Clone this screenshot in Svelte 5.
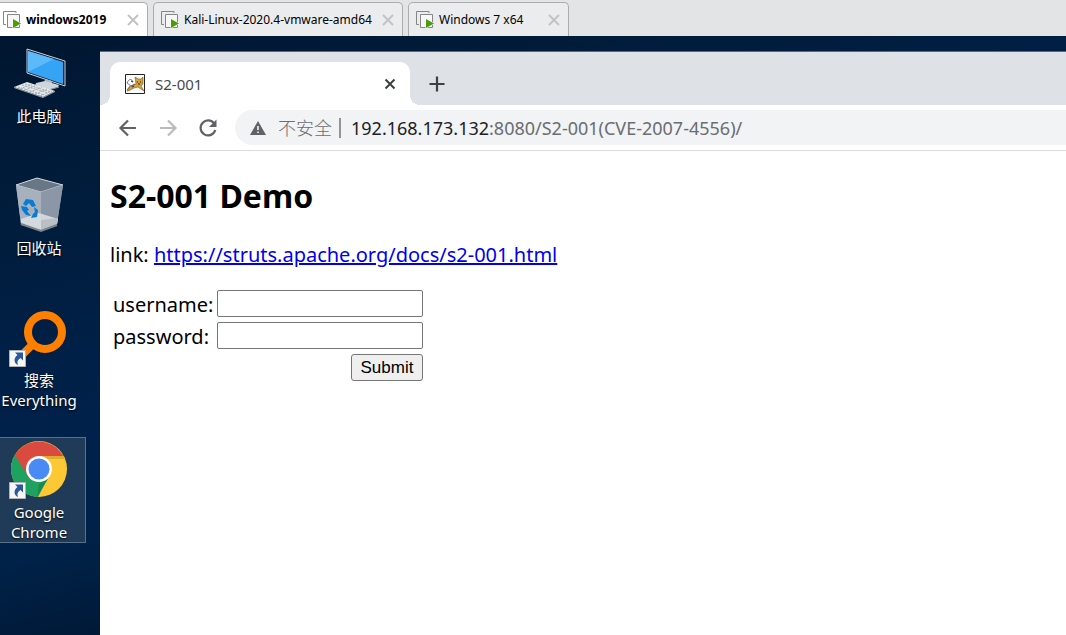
<script>
  const machines = [
    { name: 'windows2019', active: true, kind: 'first' },
    { name: 'Kali-Linux-2020.4-vmware-amd64', active: false, kind: 'wide' },
    { name: 'Windows 7 x64', active: false, kind: 'narrow' }
  ];
  const shortcuts = [
    { id: 'pc', label: '此电脑' },
    { id: 'bin', label: '回收站' },
    { id: 'search', label: '搜索 Everything' },
    { id: 'chrome', label: 'Google Chrome' }
  ];
  let username = $state('');
  let password = $state('');
</script>

<div class="screen">
  <nav class="machines" aria-label="Virtual machines">
    {#each machines as m}
      <div class="machine {m.kind}" class:active={m.active}>
        <button class="machine-name">
          <svg width="18" height="18" viewBox="0 0 18 18" aria-hidden="true">
            <path d="M3 13.5H.5V.5H13V2" fill="none" stroke="#858585" />
            <path d="M4.5 3.500h12v13h-12z" fill="#f7f7f7" stroke="#858585" />
            <path d="M10 8v9l8-4.500z" fill="#4a9c0b" stroke="#fff" stroke-width="1" paint-order="stroke" />
          </svg>
          <span>{m.name}</span>
        </button>
        <button class="machine-close" aria-label="Close {m.name}">
          <svg width="12" height="12" viewBox="0 0 12 12"><path d="M1 1l10 10M11 1L1 11" stroke="#c3c3c3" stroke-width="2" /></svg>
        </button>
      </div>
    {/each}
  </nav>

  <div class="desktop">
    <aside class="shortcuts">
      {#each shortcuts as s}
        <button class="shortcut" class:selected={s.id === 'chrome'}>
          <svg class="picture" width="60" height="58" viewBox="0 0 60 58" aria-hidden="true">
            {#if s.id === 'pc'}
              <path d="M18 4l38 12v25l-38-13z" fill="#182536" stroke="#c7d0d8" />
              <path d="M19 6l35 11v22L19 27z" fill="#36a4f5" />
              <path d="M19 6l26 8-26 13z" fill="#5cb9fa" />
              <path d="M36 34l7 2v4l-8-2z" fill="#aab6bf" />
              <path d="M27 38l9-2 14 4-1 2-10 3-13-4z" fill="#cfd6db" />
              <path d="M27 41l13 4 10-3" fill="none" stroke="#8c98a1" />
              <path d="M5 42l13-5 28 9-12 6z" fill="#e5e9eb" />
              <path d="M5 42v1l29 10 12-6v-1l-12 6z" fill="#9aa4ab" />
              <path d="M9 42l26 8M13 40l26 8M16 39l26 8M11 44l12-5M16 45l12-5M21 47l12-5M26 49l12-5M31 51l12-5" stroke="#a4afb6" stroke-width="1" stroke-dasharray="2 1" />
            {:else if s.id === 'bin'}
              <path d="M7 8l21-7 26 7-6 39-16 6-20-5z" fill="#8c99a7" />
              <path d="M7 8l21-7 26 7-22 7z" fill="#687685" stroke="#cdd3da" />
              <path d="M7 8l25 7v38l-20-6z" fill="#a7b1bd" />
              <path d="M32 15l22-7-6 39-16 6z" fill="#8b97a6" />
              <path d="M12 42l18-6 19 6-1 5-16 6-20-6z" fill="#dce0e3" opacity=".85" />
              <path d="M32 43v10l16-6 1-6z" fill="#b9bfc5" />
              <path d="M12 47l20 7 16-6" fill="none" stroke="#7b838b" stroke-width="2" />
              <g fill="#087bd5">
                <path d="M14 27l3-5 7 1 3 6-4 1-3-4-3 3z" />
                <path d="M25 30l4 3-1 7-6 1 2-4 2-2z" />
                <path d="M12 29l6 1 2 3-2 1 4 5-5-1-4-5z" />
              </g>
            {:else if s.id === 'search'}
              <path d="M25 34L9 50" stroke="#ff8000" stroke-width="8" />
              <circle cx="36" cy="23" r="17" fill="none" stroke="#ff8000" stroke-width="8" />
            {:else}
              <circle cx="30" cy="28" r="28" fill="#fcc934" />
              <path d="M30 28L42 31 29 56A28 28 0 0 1 5.800 14z" fill="#1da260" />
              <path d="M30 28L20 37 5.800 14A28 28 0 0 1 54.200 15L30 15z" fill="#db4a3e" />
              <path d="M30 15h25l1 3H38z" fill="#e0ad2e" />
              <path d="M28 56l12-20-10 7z" fill="#168c54" />
              <circle cx="30" cy="28" r="13" fill="#fff" />
              <circle cx="30" cy="28" r="10.500" fill="#4a8af4" />
            {/if}
            {#if s.id === 'search' || s.id === 'chrome'}
              <path d="M.5 41.500h16v16H.5z" fill="#f6f6f6" stroke="#b2b2b2" />
              <path d="M6 43.500h8v8l-2.500-2.500c-3 2-3.500 3.500-2.500 7-4-1.500-5-6.500-.5-10z" fill="#29589b" />
            {/if}
          </svg>
          <span class="caption">{s.label}</span>
        </button>
      {/each}
    </aside>

    <section class="browser">
      <header class="tabstrip">
        <div class="tab">
          <svg width="20" height="20" viewBox="0 0 20 20" aria-hidden="true">
            <path d="M.5.5h19v19H.5z" fill="#fff" stroke="#222" />
            <path d="M2 17c2-4 5-6 9-7l-1-7 3 2h3l2-2v7l-2 2 3 5-6-4-4 1c-3 1-4 3-7 3z" fill="#d3a23c" stroke="#755522" stroke-width=".6" />
            <path d="M2 9c2-5 5-4 6-1M2 9l4 3 4-2M2 16l3-4" stroke="#555" fill="none" stroke-width=".8" />
            <path d="M12 8h1M15 8h1M13 10h2M6 7l2 1M7 13l2-1" stroke="#222" />
          </svg>
          <span class="tab-title">S2-001</span>
          <button aria-label="Close tab">
            <svg width="12" height="12" viewBox="0 0 12 12"><path d="M1.500 1.500l9 9M10.500 1.500l-9 9" stroke="#3c4043" stroke-width="2" /></svg>
          </button>
        </div>
        <button class="new-tab" aria-label="New tab">
          <svg width="16" height="16" viewBox="0 0 16 16"><path d="M8 .5v15M.5 8h15" stroke="#3c4043" stroke-width="2.200" /></svg>
        </button>
      </header>

      <div class="toolbar">
        <button aria-label="Back"><svg width="20" height="20" viewBox="0 0 20 20"><path d="M18 10H3M10 2.500L2.500 10l7.500 7.500" fill="none" stroke="#5f6368" stroke-width="2.200" /></svg></button>
        <button aria-label="Forward"><svg width="20" height="20" viewBox="0 0 20 20"><path d="M2 10h15M10 2.500l7.500 7.500-7.500 7.500" fill="none" stroke="#b9bbbd" stroke-width="2.200" /></svg></button>
        <button aria-label="Reload"><svg width="20" height="20" viewBox="0 0 20 20"><path d="M16.500 6A7.500 7.500 0 1 0 17.300 12" fill="none" stroke="#5f6368" stroke-width="2.200" /><path d="M18.500 1.500V9H11z" fill="#5f6368" /></svg></button>
        <div class="address">
          <svg width="16" height="14" viewBox="0 0 16 14" aria-hidden="true"><path d="M8 0l8 14H0z" fill="#5f6368" /><path d="M8 5v4M8 10.500v1.500" stroke="#fff" stroke-width="1.500" /></svg>
          <span class="insecure">不安全</span>
          <span class="url"><span class="host">192.168.173.132</span>:8080/S2-001(CVE-2007-4556)/</span>
        </div>
      </div>

      <main>
        <h2>S2-001 Demo</h2>
        <p>link: <a href="https://struts.apache.org/docs/s2-001.html">https://struts.apache.org/docs/s2-001.html</a></p>
        <form onsubmit={(e) => e.preventDefault()}>
          <label for="username">username:</label>
          <input id="username" type="text" bind:value={username} />
          <label for="password">password:</label>
          <input id="password" type="text" bind:value={password} />
          <button type="submit">Submit</button>
        </form>
      </main>
    </section>
  </div>
</div>

<style>
  :global(body) { margin: 0; }
  * { box-sizing: border-box; }
  button {
    display: flex;
    align-items: center;
    justify-content: center;
    padding: 0;
    border: 0;
    background: none;
    color: inherit;
    font: inherit;
  }
  svg { display: block; flex: none; }
  .screen {
    display: flex;
    flex-direction: column;
    min-height: 100vh;
    overflow: hidden;
    font-family: "Noto Sans", "Noto Sans CJK SC", sans-serif;
  }
  .machines {
    display: flex;
    gap: 5px;
    height: 36px;
    padding-top: 2px;
    background: #e3e4e6;
    font: 12px/16px "Noto Sans", sans-serif;
  }
  .machine {
    display: flex;
    align-items: center;
    justify-content: space-between;
    padding: 0 8px 0 7px;
    border: 1px solid #acacac;
    border-bottom: 0;
    border-radius: 5px 5px 0 0;
    background: #ebecee;
    color: #000;
  }
  .machine.first { width: 148px; padding-left: 3px; border-left: 0; border-top-left-radius: 0; }
  .machine.wide { width: 250px; }
  .machine.narrow { width: 161px; }
  .machine.active { background: #fff; font-weight: bold; }
  .machine-name { gap: 5px; white-space: nowrap; }
  .desktop {
    display: flex;
    flex: 1;
    background: linear-gradient(165deg, #001630 0%, #001c3b 18%, #00214a 45%, #002248 60%, #001632 74%, #00224a 100%);
  }
  .shortcuts {
    display: flex;
    flex-direction: column;
    flex: none;
    gap: 26px;
    width: 100px;
    padding-top: 5px;
    color: #fff;
  }
  .shortcut {
    flex-direction: column;
    justify-content: flex-start;
    gap: 3px;
    width: 86px;
    height: 106px;
    flex: none;
    padding: 4px 8px 0 0;
    font-size: 15px;
    line-height: 20px;
    border: 0;
  }
  .selected { background: #203b58; box-shadow: inset -1px 0 #5a7088, inset 0 1px #5a7088, inset 0 -1px #5a7088; }
  .caption { text-shadow: 0 1px 2px #000; }
  .browser {
    flex: 1;
    min-width: 0;
    margin-top: 15px;
    border-top: 1px solid #5f6873;
    background: #fff;
  }
  .tabstrip { display: flex; height: 53px; padding: 10px 10px 0; background: #dee1e6; }
  .tab {
    position: relative;
    display: flex;
    align-items: center;
    gap: 10px;
    width: 300px;
    padding: 0 14px 0 15px;
    border-radius: 10px 10px 0 0;
    background: #fff;
    color: #45494d;
    font-size: 15px;
  }
  .tab::before, .tab::after {
    content: "";
    position: absolute;
    bottom: 0;
    width: 10px;
    height: 10px;
  }
  .tab::before { right: 100%; background: radial-gradient(circle at 0 0, #dee1e6 10px, #fff 10px); }
  .tab::after { left: 100%; background: radial-gradient(circle at 100% 0, #dee1e6 10px, #fff 10px); }
  .tab-title { flex: 1; }
  .new-tab { width: 54px; }
  .toolbar {
    display: flex;
    align-items: center;
    gap: 20px;
    height: 46px;
    padding-left: 18px;
    border-bottom: 1px solid #dadce0;
  }
  .address {
    display: flex;
    align-items: center;
    flex: 1;
    height: 35px;
    margin-left: -3px;
    padding-left: 15px;
    border-radius: 18px 0 0 18px;
    background: #f1f3f4;
    color: #6a6d71;
    font-size: 18px;
    line-height: 20px;
    white-space: nowrap;
  }
  .insecure { margin: 0 10px 0 12px; padding-right: 7px; border-right: 2px solid #929497; font-weight: 300; }
  .host { color: #202124; }
  main { padding: 22px 10px; color: #000; font-size: 20px; line-height: 28px; }
  h2 { margin: 0 0 22px; font-size: 32px; line-height: 46px; }
  p { margin: 0 0 21px; }
  a { color: #0000ee; text-decoration-thickness: 2px; }
  form {
    display: grid;
    grid-template-columns: 101px 206px;
    column-gap: 3px;
    row-gap: 5px;
    align-items: center;
    padding-left: 3px;
  }
  form label { height: 27px; line-height: 29px; white-space: nowrap; }
  form input {
    width: 100%;
    height: 27px;
    padding: 1px 3px;
    border: 1px solid #767676;
    border-radius: 2px;
    font: 17px/20px "Liberation Sans", Arial, sans-serif;
  }
  form button {
    grid-column: 2;
    justify-self: end;
    width: 72px;
    height: 27px;
    border: 1px solid #767676;
    border-radius: 3px;
    background: #efefef;
    font: 17px/20px "Liberation Sans", Arial, sans-serif;
  }
</style>
